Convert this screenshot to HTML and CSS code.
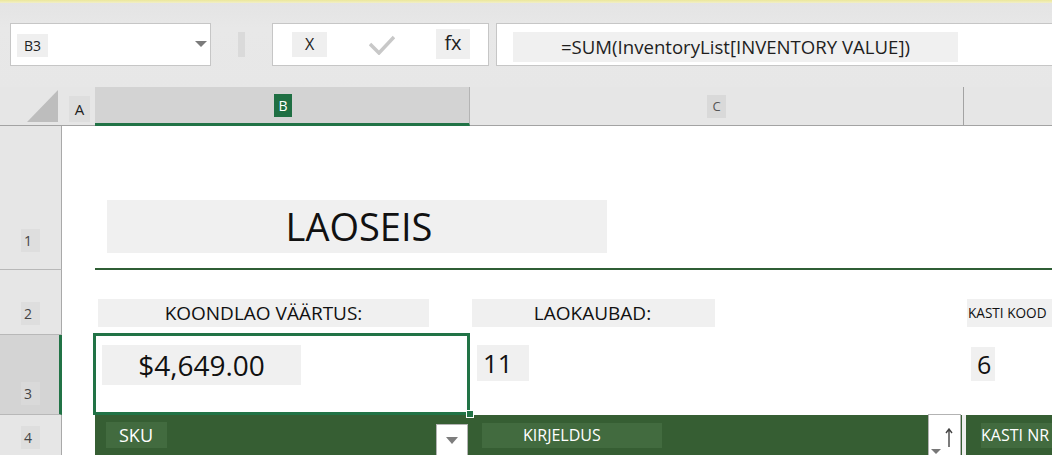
FILE: index.html
```html
<!DOCTYPE html>
<html lang="et">
<head>
<meta charset="utf-8">
<title>Laoseis</title>
<link rel="stylesheet" href="styles.css">
</head>
<body>
<div class="app">
  <div class="topline"></div>
  <div class="toolbar">
    <div class="namebox">
      <span class="namebox-label">B3</span>
      <span class="namebox-arrow"></span>
    </div>
    <div class="grip"></div>
    <div class="fbuttons">
      <span class="fbtn-x">X</span>
      <svg class="fbtn-check" width="26" height="20" viewBox="0 0 26 20"><polyline points="1,9 10,18 25,2" fill="none" stroke="#c8c8c8" stroke-width="3.5"/></svg>
      <span class="fbtn-fx">fx</span>
    </div>
    <div class="formula">
      <span class="formula-text">=SUM(InventoryList[INVENTORY VALUE])</span>
    </div>
  </div>

  <div class="sheet">
    <!-- header row -->
    <div class="ch ch-corner">
      <svg width="62" height="38" viewBox="0 0 62 38"><polygon points="27,35 58,35 58,3" fill="#bdbdbd"/></svg>
    </div>
    <div class="ch ch-a"><span class="ch-label">A</span></div>
    <div class="ch ch-b"><span class="ch-label-sel">B</span></div>
    <div class="ch ch-c"><span class="ch-label ch-label-c">C</span></div>
    <div class="ch ch-d"></div>

    <!-- row 1 -->
    <div class="rh rh-1"><span class="rh-label">1</span></div>
    <div class="cell"></div>
    <div class="cell title-cell">
      <div class="title-box">LAOSEIS</div>
    </div>

    <!-- row 2 -->
    <div class="rh rh-2"><span class="rh-label">2</span></div>
    <div class="cell"></div>
    <div class="cell r2"><div class="kpi-label kpi-label-b">KOONDLAO VÄÄRTUS:</div></div>
    <div class="cell r2"><div class="kpi-label kpi-label-c">LAOKAUBAD:</div></div>
    <div class="cell r2 r2-d"><div class="kpi-label kpi-label-d">KASTI KOOD</div></div>

    <!-- row 3 -->
    <div class="rh rh-3"><span class="rh-label rh-label-sel">3</span></div>
    <div class="cell"></div>
    <div class="cell r3 selected">
      <div class="kpi-value kpi-value-b">$4,649.00</div>
      <span class="sel-frame"></span>
      <span class="fill-handle"></span>
    </div>
    <div class="cell r3"><div class="kpi-value kpi-value-c">11</div></div>
    <div class="cell r3 r3-d"><div class="kpi-value kpi-value-d">6</div></div>

    <!-- row 4 -->
    <div class="rh rh-4"><span class="rh-label">4</span></div>
    <div class="cell"></div>
    <div class="cell th th-b">
      <span class="th-label th-sku">SKU</span>
      <span class="filter-btn"><span class="filter-arrow"></span></span>
    </div>
    <div class="cell th th-c">
      <span class="th-label th-kirj">KIRJELDUS</span>
      <span class="sort-btn">
        <span class="sort-down"></span>
        <svg class="sort-up" width="8" height="19" viewBox="0 0 8 19"><path d="M4 19V2M1 5L4 1L7 5" fill="none" stroke="#444" stroke-width="1.4"/></svg>
      </span>
    </div>
    <div class="cell th th-d">
      <span class="th-label th-kasti">KASTI NR</span>
    </div>
  </div>
</div>
</body>
</html>
```

FILE: styles.css
```css
* { box-sizing: border-box; }
html, body { margin: 0; padding: 0; }
body {
  width: 1052px;
  height: 455px;
  overflow: hidden;
  background: #ffffff;
  font-family: "Open Sans", "Noto Sans", "DejaVu Sans", sans-serif;
  color: #1e1e1e;
}
.app { width: 1052px; }

.topline {
  height: 3px;
  background: linear-gradient(#ece79a, #f1efc8);
}

/* ---------- toolbar ---------- */
.toolbar {
  height: 84px;
  background: linear-gradient(#e4e4e4, #e8e8e8 30%, #e7e7e7);
  display: flex;
  align-items: flex-start;
  padding-top: 20px;
}
.namebox {
  margin-left: 10px;
  width: 201px;
  height: 43px;
  background: #fff;
  border: 1px solid #c6c6c6;
  display: flex;
  align-items: flex-start;
  padding: 10px 3px 0 6px;
}
.namebox-label {
  width: 31px;
  height: 23px;
  line-height: 23px;
  background: #efefef;
  font-size: 14px;
  text-align: center;
  color: #222;
}
.namebox-arrow {
  margin-left: auto;
  margin-top: 7px;
  width: 0;
  height: 0;
  border-left: 6px solid transparent;
  border-right: 6px solid transparent;
  border-top: 6px solid #7b7b7b;
}
.grip {
  margin-left: 27px;
  margin-top: 9px;
  width: 7px;
  height: 25px;
  background: #dadada;
}
.fbuttons {
  margin-left: 27px;
  width: 217px;
  height: 43px;
  background: #fff;
  border: 1px solid #c6c6c6;
  display: flex;
  align-items: flex-start;
  padding-left: 19px;
}
.fbtn-x {
  margin-top: 8px;
  width: 35px;
  height: 25px;
  line-height: 25px;
  background: #efefef;
  text-align: center;
  font-size: 16px;
  color: #222;
}
.fbtn-check {
  margin-left: 42px;
  margin-top: 11px;
}
.fbtn-fx {
  margin-left: 41px;
  margin-top: 5px;
  width: 34px;
  height: 30px;
  line-height: 28px;
  background: #efefef;
  text-align: center;
  font-size: 20px;
  color: #222;
}
.formula {
  margin-left: 7px;
  flex: 1;
  height: 43px;
  background: #fff;
  border: 1px solid #c6c6c6;
  border-right: none;
  padding: 8px 0 0 16px;
}
.formula-text {
  display: block;
  width: 445px;
  height: 30px;
  line-height: 30px;
  background: #f0f0f0;
  text-align: center;
  font-size: 18.6px;
  color: #1e1e1e;
}

/* ---------- sheet grid ---------- */
.sheet {
  display: grid;
  grid-template-columns: 62px 33px 375px 494px 88px;
  grid-template-rows: 39px 144px 65px 80px 40px;
}

.ch {
  background: #e6e6e6;
  border-bottom: 1px solid #a3a3a3;
  position: relative;
}
.ch-corner svg { display: block; }
.ch-a { padding: 9px 0 0 7px; }
.ch-label {
  display: inline-block;
  width: 21px;
  height: 26px;
  line-height: 26px;
  text-align: center;
  font-size: 15px;
  background: #dedede;
  color: #222;
}
.ch-b {
  background: #d3d3d3;
  border-bottom: 3px solid #217346;
  border-right: 1px solid #b4b4b4;
  padding: 7px 0 0 179px;
}
.ch-label-sel {
  display: inline-block;
  width: 18px;
  height: 23px;
  line-height: 23px;
  text-align: center;
  font-size: 14px;
  background: #1f6f43;
  color: #fff;
}
.ch-c {
  border-right: 1px solid #a3a3a3;
  padding: 7px 0 0 237px;
}
.ch-label-c {
  width: 19px;
  height: 23px;
  line-height: 23px;
  font-size: 13px;
  background: #d9d9d9;
  color: #555;
}

.rh {
  background: #e6e6e6;
  border-right: 1px solid #a9a9a9;
  border-bottom: 1px solid #b8b8b8;
  display: flex;
  align-items: flex-end;
  padding-left: 21px;
}
.rh-1 { padding-bottom: 17px; }
.rh-2 { padding-bottom: 9px; }
.rh-3 {
  background: #d4d4d4;
  border-right: 3px solid #217346;
  padding-bottom: 9px;
}
.rh-4 { align-items: flex-start; padding-top: 11px; border-bottom: none; }
.rh-label {
  display: inline-block;
  width: 19px;
  height: 23px;
  line-height: 23px;
  font-size: 14px;
  color: #444;
  background: #dedede;
  padding-left: 3px;
}
.rh-label-sel { background: #d9d9d9; }

.cell {
  background: #fff;
  position: relative;
}

/* row 1 */
.title-cell {
  grid-column: 3 / 6;
  border-bottom: 2px solid #2f5e35;
  padding: 74px 0 0 12px;
}
.title-box {
  width: 500px;
  height: 53px;
  line-height: 53px;
  background: #f0f0f0;
  text-align: center;
  font-size: 38px;
  color: #111;
  padding-left: 4px;
}

/* row 2 */
.r2 { padding-top: 29px; }
.kpi-label {
  height: 28px;
  line-height: 28px;
  background: #f0f0f0;
  text-align: center;
  font-size: 19px;
  color: #111;
}
.kpi-label-b { margin-left: 3px; width: 331px; }
.kpi-label-c { margin-left: 2px; width: 243px; padding-right: 2px; }
.kpi-label-d {
  margin-left: 3px;
  width: 85px;
  font-size: 13.6px;
  text-align: left;
  padding-left: 1px;
  white-space: nowrap;
  overflow: hidden;
}

/* row 3 */
.r3 { padding-top: 10px; }
.kpi-value {
  background: #f0f0f0;
  color: #111;
}
.kpi-value-b {
  margin-left: 7px;
  width: 199px;
  height: 40px;
  line-height: 40px;
  font-size: 28px;
  text-align: center;
}
.kpi-value-c {
  margin-left: 7px;
  width: 52px;
  height: 36px;
  line-height: 36px;
  font-size: 26px;
  padding-left: 6px;
}
.r3-d { padding-top: 12px; }
.kpi-value-d {
  margin-left: 7px;
  width: 24px;
  height: 34px;
  line-height: 34px;
  font-size: 25px;
  padding-left: 6px;
}
.sel-frame {
  position: absolute;
  left: -2px;
  top: -2px;
  right: 0;
  bottom: 0;
  border: 3px solid #217346;
  z-index: 2;
}
.fill-handle {
  position: absolute;
  right: -4px;
  bottom: -3px;
  width: 8px;
  height: 8px;
  background: #217346;
  border: 1px solid #fff;
  z-index: 3;
}

/* row 4: table header */
.th {
  background: #365e33;
  display: flex;
  align-items: flex-start;
}
.th-label {
  background: #426b3f;
  color: #fff;
}
.th-sku {
  margin: 7px 0 0 11px;
  width: 61px;
  height: 26px;
  line-height: 26px;
  font-size: 18px;
  padding-left: 13px;
}
.filter-btn {
  margin: 9px 2px 0 auto;
  width: 32px;
  height: 33px;
  background: #fff;
  border: 1px solid #b3b3b3;
  display: flex;
  justify-content: center;
  padding-top: 12px;
}
.filter-arrow {
  width: 0;
  height: 0;
  border-left: 6.5px solid transparent;
  border-right: 6.5px solid transparent;
  border-top: 7px solid #7d7d7d;
}
.th-c { border-right: 2px solid #eeeeee; }
.th-kirj {
  margin: 8px 0 0 12px;
  width: 180px;
  height: 25px;
  line-height: 25px;
  font-size: 16px;
  padding-left: 41px;
}
.sort-btn {
  margin: -1px 1px 0 auto;
  width: 33px;
  height: 42px;
  background: #fff;
  border: 1px solid #b3b3b3;
  position: relative;
}
.sort-down {
  position: absolute;
  left: 2px;
  top: 34px;
  width: 0;
  height: 0;
  border-left: 5px solid transparent;
  border-right: 5px solid transparent;
  border-top: 5px solid #777;
}
.sort-up {
  position: absolute;
  left: 16px;
  top: 13px;
}
.th-d { border-left: 2px solid #eeeeee; }
.th-kasti {
  margin: 8px 0 0 15px;
  width: 80px;
  height: 25px;
  line-height: 25px;
  font-size: 16px;
  padding-left: 0;
  white-space: nowrap;
}
```
